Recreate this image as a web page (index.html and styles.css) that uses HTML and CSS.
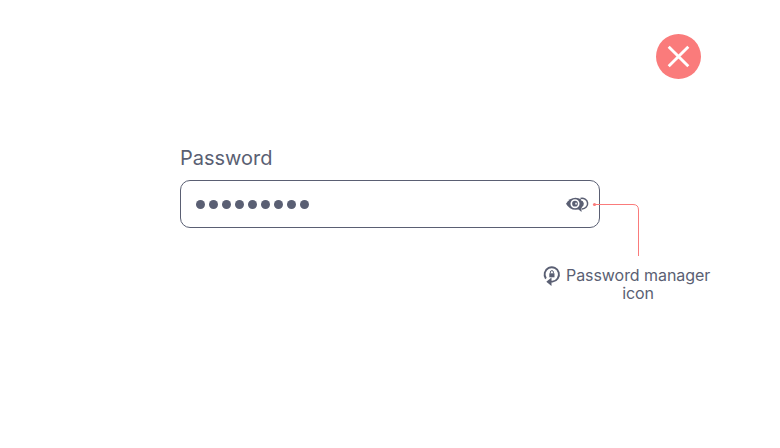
FILE: index.html
```html
<!DOCTYPE html>
<html lang="en">
<head>
<meta charset="utf-8">
<title>Password field</title>
<link rel="stylesheet" href="styles.css">
</head>
<body>
<main class="page">
  <div class="status">
    <svg width="45" height="45" viewBox="0 0 45 45"><circle cx="22.5" cy="22.5" r="22.5" fill="#fa7b7b"/><path d="M12.700 12.700l19.600 19.600M32.300 12.700l-19.600 19.600" stroke="#fff" stroke-width="2.900" fill="none"/></svg>
  </div>
  <section class="field">
    <label class="label">Password</label>
    <div class="input">
      <div class="dots"><i></i><i></i><i></i><i></i><i></i><i></i><i></i><i></i><i></i></div>
      <svg class="eye" width="24" height="18" viewBox="0 0 24 18">
        <path d="M1 8.700Q4.500 2.700 10.500 2.700T20 8.700Q16.500 14.700 10.500 14.700T1 8.700z" fill="#5a5f73"/>
        <circle cx="10" cy="8.700" r="3.700" fill="none" stroke="#fff" stroke-width="1.700"/>
        <path d="M10.300 7.700h1.500v1.900h-1.500z" fill="#fff"/>
        <path d="M16 4.500a4.500 4.500 0 0 1 1.200 8.300" fill="none" stroke="#fff" stroke-width="1.300"/>
        <path d="M15.500 3.500A5.600 5.300 0 1 1 17 13.900" fill="none" stroke="#5a5f73" stroke-width="1.500"/>
        <path d="M12.500 13.600l4-2.600v6z" fill="#5a5f73"/>
      </svg>
    </div>
    <svg class="pointer" width="48" height="56" viewBox="0 0 48 56"><circle cx="2.500" cy="4.500" r="1.600" fill="#fa7b7b"/><path d="M2 4.500H41Q46.500 4.500 46.500 10V56" fill="none" stroke="#fa7b7b"/></svg>
  </section>
  <section class="caption">
    <svg width="20" height="22" viewBox="0 0 20 22">
      <path d="M3.900 13.600A7.200 7.200 0 1 1 10.500 16.600H8" fill="none" stroke="#5a5f73" stroke-width="1.900"/>
      <path d="M4.300 16.700l5.200-4.200v8.400z" fill="#5a5f73"/>
      <path d="M7.300 8.300h5.200v4H7.300z" fill="#5a5f73"/><path d="M8.400 8.500V7.100a1.500 1.500 0 0 1 3 0V8.500" fill="none" stroke="#5a5f73"/>
    </svg>
    <p class="text">Password manager<br>icon</p>
  </section>
</main>
</body>
</html>
```
FILE: styles.css
```css
body { margin: 0; background: #fff; color: #5a5f73; font-family: Inter, sans-serif; }
svg { display: block; flex: none; }
.page { box-sizing: border-box; width: 780px; height: 448px; padding-top: 34px; overflow: hidden; }
.status { display: flex; justify-content: flex-end; padding-right: 79px; }
.field { position: relative; width: 420px; margin: 67px 0 0 180px; }
.label { display: block; height: 34px; font-size: 20px; line-height: 24px; }
.input { box-sizing: border-box; display: flex; align-items: center; justify-content: space-between; height: 48px; padding: 0 10px 0 15px; border: 1px solid #5a5f73; border-radius: 10px; }
.dots { display: flex; gap: 4px; }
.dots i { width: 9px; height: 9px; border-radius: 50%; background: #5a5f73; }
.pointer { position: absolute; left: 412px; top: 54px; }
.caption { display: flex; gap: 4px; margin: 37px 0 0 542px; }
.text { margin: 1px 0 0; font-size: 16px; line-height: 18px; letter-spacing: -.06px; text-align: center; }
```
